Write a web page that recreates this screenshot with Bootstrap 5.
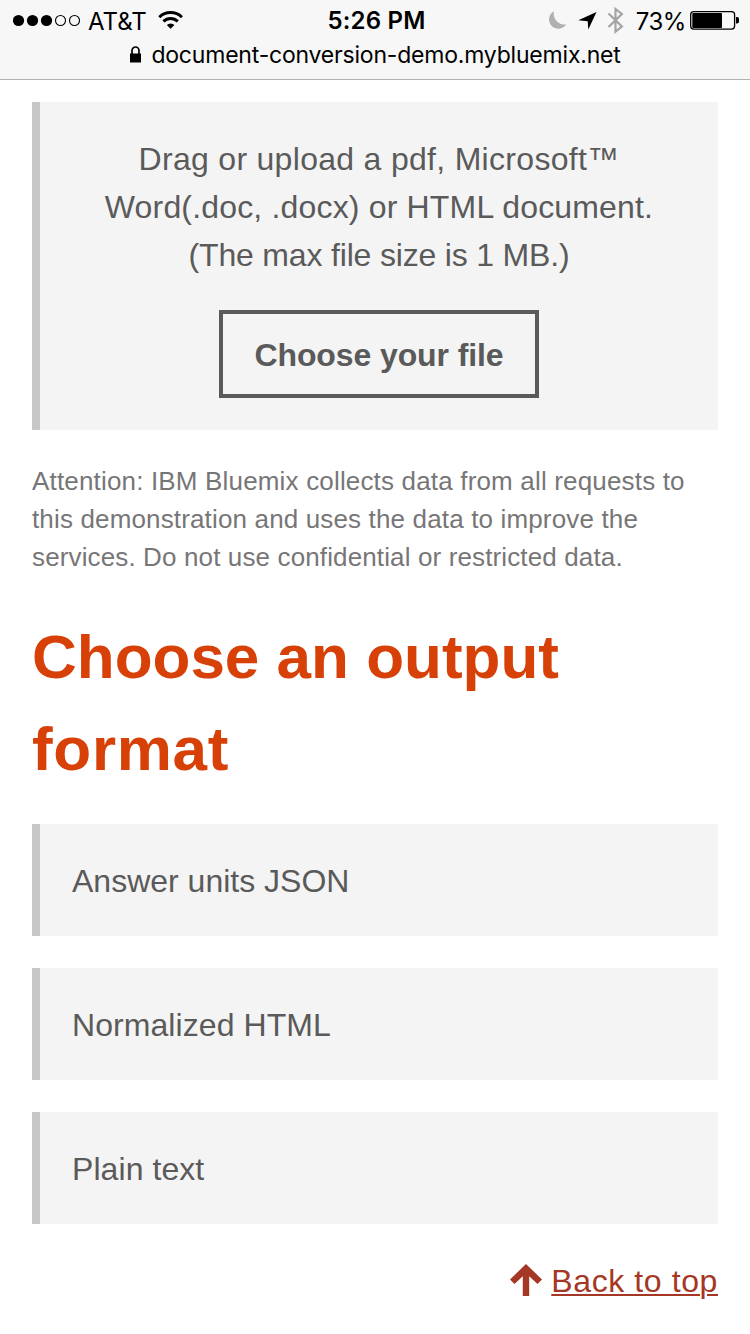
<!DOCTYPE html>
<html lang="en">
<head>
<meta charset="utf-8">
<meta name="viewport" content="width=device-width, initial-scale=1">
<title>Document Conversion Demo</title>
<link href="https://cdn.jsdelivr.net/npm/bootstrap@5.3.0/dist/css/bootstrap.min.css" rel="stylesheet">
<style>
  body { font-family: "Liberation Sans", Arial, sans-serif; font-size: 32px; line-height: 48px; color: #5a5a5a; background: #fff; }
  .browser-bar { height: 80px; background: #f7f7f7; border-bottom: 1px solid #b2b2b2; color: #000; font-family: Inter, sans-serif; font-size: 24px; }
  .status-row { display: grid; grid-template-columns: 1fr auto 1fr; height: 40px; padding: 0 10px 0 13px; line-height: 40px; }
  .status-row span, .clock { padding-top: 1px; }
  .status-row svg { margin-bottom: 2px; }
  .clock { font-weight: 600; letter-spacing: .2px; }
  .address { height: 30px; line-height: 30px; font-size: 23px; letter-spacing: -.2px; }
  svg { display: block; flex: none; }
  main { padding: 22px 32px 0; }
  .panel { background: #f4f4f4; border-left: 8px solid #c7c7c7; }
  .dropzone { height: 328px; padding-top: 33px; }
  .ln { display: block; white-space: nowrap; }
  .choose-btn { width: 320px; height: 88px; margin-top: 31px; border: 4px solid #5a5a5a; border-radius: 0; color: #5a5a5a; font-size: 32px; font-weight: 700; line-height: 1; letter-spacing: -.1px; padding: 2px 0 0; }
  .notice { margin: 32px 0 0; font-size: 26px; line-height: 38px; color: #777677; letter-spacing: .17px; }
  .format-title { margin: 35px 0 0; font-size: 62px; font-weight: 700; line-height: 92px; color: #d74108; }
  .formats { margin-top: 29px; gap: 32px; }
  .format-option { height: 112px; padding: 2px 32px 0; }
  .top-link { margin-top: 33px; color: #a53725; letter-spacing: .6px; text-decoration-thickness: 2px; text-underline-offset: 2px; }
</style>
</head>
<body>
<header class="browser-bar">
  <div class="status-row">
    <div class="d-flex align-items-center">
      <svg width="68" height="14" viewBox="0 0 68 14">
        <circle cx="5.5" cy="7.5" r="5.6"/><circle cx="19.5" cy="7.5" r="5.6"/><circle cx="33.5" cy="7.5" r="5.6"/>
        <g fill="none" stroke="#000" stroke-width="1.1"><circle cx="47.5" cy="7.5" r="5"/><circle cx="61.5" cy="7.5" r="5"/></g>
      </svg>
      <span style="margin-left:7px">AT&amp;T</span>
      <svg style="margin-left:11px" width="26" height="20" viewBox="158 10 26 20">
        <g fill="none" stroke="#000" stroke-width="3">
          <path d="M159.3 17.2a16.2 16.2 0 0 1 22.6 0"/><path d="M163.4 21.4a10.2 10.2 0 0 1 14.4 0"/>
        </g>
        <path d="M166.8 25a5.4 5.4 0 0 1 7.6 0l-3.8 3.8z"/>
      </svg>
    </div>
    <div class="clock">5:26 PM</div>
    <div class="d-flex align-items-center justify-content-end">
      <svg width="90" height="40" viewBox="540 0 90 40">
        <path fill="#b0b0b0" d="M554 11.200a9.300 9.300 0 1 0 12.200 13.200a10.800 10.800 0 0 1-12.200-13.200z"/>
        <path d="M596.5 12l-8.2 17.5-.6-8.200-9.400-1.100z"/>
        <path fill="none" stroke="#a3a3a3" stroke-width="2.200" d="M608.500 13.500l13.400 13-6.400 5.200V9l6.400 5-13.400 13"/>
      </svg>
      <span style="margin-left:6px;margin-right:4px;letter-spacing:-.4px">73%</span>
      <svg width="50" height="20" viewBox="690 10 50 20">
        <rect x="690.700" y="11.700" width="43.900" height="17.400" rx="3" fill="none" stroke="#000" stroke-width="1.300"/>
        <rect x="692.300" y="13" width="29.700" height="15" rx="1"/><path d="M736 17h1q2 0 2 2v2.500q0 2-2 2h-1z"/>
      </svg>
    </div>
  </div>
  <div class="address d-flex justify-content-center">
    <svg width="13" height="18" viewBox="0 0 13 18" style="margin:6px 9px 0 0"><rect x="1" y="7.500" width="11" height="9"/><path fill="none" stroke="#000" stroke-width="1.700" d="M3 8V4.500a3.500 3.500 0 0 1 7 0V8"/></svg>
    <span>document-conversion-demo.mybluemix.net</span>
  </div>
</header>
<main>
  <section class="panel dropzone text-center">
    <p class="m-0">
      <span class="ln" style="letter-spacing:.3px">Drag or upload a pdf, Microsoft™</span>
      <span class="ln" style="letter-spacing:.17px">Word(.doc, .docx) or HTML document.</span>
      <span class="ln" style="letter-spacing:-.18px">(The max file size is 1 MB.)</span>
    </p>
    <button type="button" class="btn choose-btn">Choose your file</button>
  </section>
  <p class="notice">
    <span class="ln">Attention: IBM Bluemix collects data from all requests to</span>
    <span class="ln" style="letter-spacing:.15px">this demonstration and uses the data to improve the</span>
    <span class="ln" style="letter-spacing:.13px">services. Do not use confidential or restricted data.</span>
  </p>
  <h2 class="format-title"><span class="ln">Choose an output</span><span class="ln" style="letter-spacing:.7px">format</span></h2>
  <div class="formats d-flex flex-column">
    <div class="panel format-option d-flex align-items-center">Answer units JSON</div>
    <div class="panel format-option d-flex align-items-center" style="letter-spacing:.07px">Normalized HTML</div>
    <div class="panel format-option d-flex align-items-center" style="letter-spacing:.07px">Plain text</div>
  </div>
  <div class="d-flex justify-content-end">
    <svg width="32" height="32" viewBox="0 0 32 32" style="margin:40px 9px 0 0"><path fill="#a53725" d="M16 0L32 15.500l-4.500 4.600-8.300-7.800V32h-6.400V12.300l-8.300 7.800L0 15.500z"/></svg>
    <a class="top-link" href="#">Back to top</a>
  </div>
</main>
<script src="https://cdn.jsdelivr.net/npm/bootstrap@5.3.0/dist/js/bootstrap.bundle.min.js"></script>
</body>
</html>
